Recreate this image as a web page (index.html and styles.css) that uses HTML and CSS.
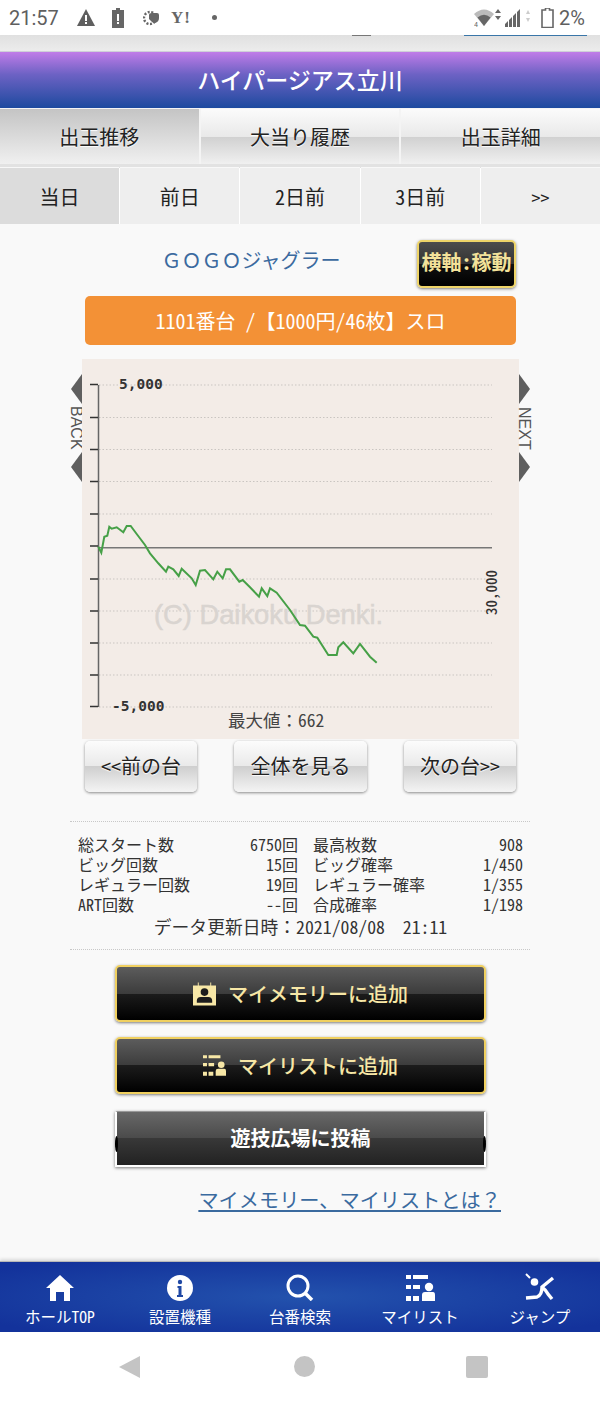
FILE: index.html
```html
<!DOCTYPE html>
<html lang="ja">
<head>
    <meta charset="UTF-8">
    <meta name="viewport" content="width=device-width, initial-scale=1.0">
    <title>ハイパージアス立川</title>
    <link rel="stylesheet" href="styles.css">
</head>
<body>
    <svg class="defs" width="0" height="0">
        <symbol id="icon-list" viewBox="0 0 29 26">
            <path d="M0 0h5v4H0zM7 0h15v4H7zM0 10h5v4H0zM7 10h7v4H7zM0 21h5v5H0zM7 21h6v5H7z"/>
            <circle cx="23" cy="12" r="4.2"/>
            <path d="M16 26v-6q0-3 3-3h8q2 0 2 3v6z"/>
        </symbol>
    </svg>

    <div class="status-bar">
        <span class="status-time">21:57</span>
        <svg class="st-warn" width="18" height="17" viewBox="0 0 18 17"><path d="M9 0l9 17H0z" fill="#5f5f5f"/><path d="M8 6h2v6H8zM8 13h2v2H8z" fill="#fff"/></svg>
        <svg class="st-batt" width="12" height="20" viewBox="0 0 12 20"><path d="M4 0h4v2h4v18H0V2h4z" fill="#666"/><path d="M5 6h2v7H5zM5 14h2v2H5z" fill="#fff"/></svg>
        <svg class="st-gear" width="16" height="18" viewBox="0 0 16 18"><circle cx="7" cy="9" r="6" fill="none" stroke="#666" stroke-width="2.4" stroke-dasharray="2 1.6"/><path d="M6 6q0-2 3-2h5q2 0 2 2v3q0 4-4 5-2 0-3-1l-3-3z" fill="#666"/></svg>
        <span class="st-yahoo">Y!</span>
        <span class="st-dot"></span>
        <span class="status-fill"></span>
        <svg class="st-wifi" width="28" height="20" viewBox="0 0 28 20"><path d="M0 6Q10-3 20 6l-10 12z" fill="#bbb"/><path d="M3.500 9.500q6.500-5.500 13 0L10 18z" fill="#666"/><text x="0" y="19" class="st-tiny">4</text><path d="M24 1l3 4h-6zM24 12l-3-4h6z" fill="#666"/></svg>
        <svg class="st-signal" width="26" height="20" viewBox="0 0 26 20"><path d="M0 19v-3l3-3v6zM4 19v-7l3-3v10zM8 19V8l3-3v14zM12 19V4l3-3v18z" fill="#666"/><path d="M23 2l2 4h-4zM23 14l-2-4h4z" fill="#ccc"/></svg>
        <svg class="st-level" width="13" height="20" viewBox="0 0 13 20"><path d="M4.500 0h4v2H12v17.500H1V2h3.500z" fill="none" stroke="#666" stroke-width="1.600"/></svg>
        <span class="status-pct">2%</span>
    </div>

    <div class="scroll-strip">
        <span class="strip-dark"></span>
        <span class="strip-link"></span>
    </div>

    <header class="hall-title">ハイパージアス立川</header>

    <nav class="tabs">
        <a class="tab active">出玉推移</a>
        <a class="tab">大当り履歴</a>
        <a class="tab">出玉詳細</a>
    </nav>

    <nav class="days">
        <a class="day active">当日</a>
        <a class="day">前日</a>
        <a class="day">2日前</a>
        <a class="day">3日前</a>
        <a class="day day-more">&gt;&gt;</a>
    </nav>

    <main class="content">
        <div class="machine-row">
            <h2 class="machine-name">ＧＯＧＯジャグラー</h2>
            <a class="axis-btn">横軸:稼動</a>
        </div>
        <div class="unit-bar">1101番台&nbsp;/【1000円/46枚】スロ</div>

        <div class="chart-row">
            <div class="side side-back">
                <span class="arrow arrow-left"></span>
                <span class="side-label">BACK</span>
                <span class="arrow arrow-left"></span>
            </div>
            <svg class="chart" width="437" height="380" viewBox="0 0 437 380">
                <g class="grid">
                    <path d="M17 26H410M17 58.500H410M17 90.500H410M17 122.500H410M17 155H410M17 220H410M17 252H410M17 284H410M17 316H410M17 348H410"/>
                </g>
                <text x="72" y="265" class="watermark">(C) Daikoku Denki.</text>
                <path class="zero" d="M17 188.700H410"/>
                <path class="axis" d="M16.500 26V348"/>
                <path class="ticks" d="M8 25.500H16M8 58.500H16M8 90.500H16M8 122.500H16M8 155H16M8 187H16M8 220H16M8 252H16M8 284H16M8 316H16M8 347.500H16"/>
                <text x="37" y="30" class="scale">5,000</text>
                <text x="30" y="352" class="scale">-5,000</text>
                <polyline class="trend" points="16.300,187.700 19.300,193.700 22.300,177.700 25.300,176.700 27.300,167.700 29.700,169.700 34.700,168.300 41.300,173.300 44.700,167 48.700,167 54.700,175 63,186 68,194.300 76.300,204.300 84,212.700 86.300,207.700 91.300,210.300 96.700,217 99.700,209.700 109.700,219.300 113.700,226 118,211.700 123,211 131.300,220.300 135.300,212.700 140.700,219.300 144,210.300 148,210.300 157.300,222.700 160.700,221 168,228.300 177,237.700 179.700,229.300 185.300,237 188,229.300 194.700,233.700 208,251 218,266 223,266.700 231.300,277.700 235.300,278.700 246.300,296 254.700,296 256.300,288.300 261.300,283.300 271.300,294.300 278,285 288,297.700 294.700,303.700"/>
                <text x="146" y="368" class="max-label">最大値<tspan class="fw">：</tspan>662</text>
                <text transform="translate(415 256) rotate(-90)" class="side-scale">30,000</text>
            </svg>
            <div class="side side-next">
                <span class="arrow arrow-right"></span>
                <span class="side-label">NEXT</span>
                <span class="arrow arrow-right"></span>
            </div>
        </div>

        <div class="pager">
            <a class="pager-btn">&lt;&lt;前の台</a>
            <a class="pager-btn pager-mid">全体を見る</a>
            <a class="pager-btn">次の台&gt;&gt;</a>
        </div>

        <section class="stats">
            <div class="stats-grid">
                <span>総スタート数</span><span class="num">6750回</span><span class="second">最高枚数</span><span class="num">908</span>
                <span>ビッグ回数</span><span class="num">15回</span><span class="second">ビッグ確率</span><span class="num">1/450</span>
                <span>レギュラー回数</span><span class="num">19回</span><span class="second">レギュラー確率</span><span class="num">1/355</span>
                <span>ART回数</span><span class="num">--回</span><span class="second">合成確率</span><span class="num">1/198</span>
            </div>
            <p class="updated">データ更新日時<span class="fw">：</span>2021/08/08&nbsp;&nbsp;21:11</p>
        </section>

        <div class="actions">
            <a class="gold-btn">
                <svg class="btn-icon" width="23" height="24" viewBox="0 0 24 24">
                    <path d="M0 3h5V0h1v3h12V0h1v3h5v21H0z" fill="#f7e7a6"/>
                    <circle cx="12" cy="10" r="4" fill="#1c1c1c"/>
                    <path d="M4 21v-2q0-4 4-4h8q4 0 4 4v2z" fill="#1c1c1c"/>
                </svg>
                マイメモリーに追加
            </a>
            <a class="gold-btn">
                <svg class="btn-icon list-gold" width="23" height="21"><use href="#icon-list"/></svg>
                マイリストに追加
            </a>
            <a class="post-btn">遊技広場に投稿</a>
        </div>

        <p class="help"><a class="help-link fw">マイメモリー、マイリストとは？</a></p>
    </main>

    <footer class="bottom-nav">
        <a class="nav-item">
            <svg width="28" height="26" viewBox="0 0 28 26"><path d="M14 0l14 13h-4v13h-6v-9h-8v9H4V13H0z" fill="#fff"/></svg>
            <span>ホールTOP</span>
        </a>
        <a class="nav-item">
            <svg width="26" height="26" viewBox="0 0 26 26"><circle cx="13" cy="13" r="13" fill="#fff"/><circle cx="13" cy="7" r="2.200" fill="#1f48a4"/><path d="M10.500 11h4v9h1.500v2h-6v-2h1.500v-7h-1z" fill="#1f48a4"/></svg>
            <span>設置機種</span>
        </a>
        <a class="nav-item">
            <svg width="28" height="27" viewBox="0 0 28 27"><circle cx="12" cy="12" r="10" fill="none" stroke="#fff" stroke-width="3"/><path d="M19 19l7 7" stroke="#fff" stroke-width="3.500"/></svg>
            <span>台番検索</span>
        </a>
        <a class="nav-item">
            <svg class="list-white" width="29" height="26"><use href="#icon-list"/></svg>
            <span>マイリスト</span>
        </a>
        <a class="nav-item">
            <svg width="30" height="28" viewBox="0 0 30 28"><circle cx="9.500" cy="9" r="3.800" fill="#fff"/><path d="M1 1l4 4" stroke="#fff" stroke-width="2"/><path d="M28 5L17 14q0 8-5 10l-11 1M17 14q4 3 6 7l4 5" fill="none" stroke="#fff" stroke-width="3.400"/></svg>
            <span>ジャンプ</span>
        </a>
    </footer>

    <div class="android-nav">
        <svg width="21" height="22" viewBox="0 0 21 22"><path d="M21 0v22L0 11z" fill="#c4c4c4"/></svg>
        <span class="android-home"></span>
        <span class="android-recent"></span>
    </div>
</body>
</html>
```

FILE: styles.css
```css
* {
    box-sizing: border-box;
}
html, body {
    height: 1401px;
}
body {
    margin: 0;
    display: flex;
    flex-direction: column;
    overflow: hidden;
    background-color: #f9f9f9;
    font-family: "Noto Sans CJK JP", "Noto Sans", sans-serif;
    font-feature-settings: "hwid";
    color: #2b2b2b;
}
.defs {
    position: absolute;
}
/* full width forms, the body setting narrows them */
.fw {
    font-feature-settings: normal;
}

/* status bar */
.status-bar {
    height: 35px;
    background-color: #fff;
    display: flex;
    align-items: center;
    padding: 0 15px 0 9px;
    color: #5f5f5f;
    flex-shrink: 0;
}
.status-time {
    font-family: Roboto, sans-serif;
    font-size: 20px;
    font-feature-settings: normal;
    width: 68px;
}
.st-batt {
    margin-left: 17px;
}
.st-gear {
    margin-left: 19px;
}
.st-yahoo {
    font-family: "Liberation Serif", serif;
    font-feature-settings: normal;
    font-weight: bold;
    font-size: 17px;
    letter-spacing: 1px;
    margin-left: 12px;
    width: 23px;
    color: #666;
}
.st-dot {
    width: 5px;
    height: 5px;
    border-radius: 50%;
    background-color: #666;
    margin-left: 18px;
}
.status-fill {
    flex: 1;
}
.st-tiny {
    font-family: Roboto, sans-serif;
    font-size: 7px;
    fill: #666;
}
.st-signal {
    margin-left: 3px;
}
.st-level {
    margin-left: 10px;
}
.status-pct {
    font-family: Roboto, sans-serif;
    font-feature-settings: normal;
    font-size: 20px;
    margin-left: 5px;
}

.scroll-strip {
    height: 16px;
    flex-shrink: 0;
    display: flex;
    align-items: flex-start;
    background: linear-gradient(#e0e0e0, #ececec);
    padding-left: 352px;
}
.strip-dark {
    width: 19px;
    height: 1px;
    background-color: #777;
}
.strip-link {
    width: 123px;
    height: 1px;
    margin-left: 93px;
    background-color: #3a76a8;
}

.hall-title {
    height: 57px;
    flex-shrink: 0;
    border-top: 1px solid #cfcfd8;
    background: linear-gradient(#c07ce8, #6d62c4 40%, #1d4a9f);
    color: #fff;
    font-size: 23px;
    font-weight: 500;
    line-height: 54px;
    text-align: center;
}

/* tabs */
.tabs {
    display: flex;
    gap: 2px;
    height: 56px;
    flex-shrink: 0;
    padding-top: 1px;
    background-color: #f4f4f4;
}
.tab {
    flex: 1;
    font-size: 20px;
    line-height: 56px;
    text-align: center;
    color: #222;
    text-shadow: 0 1px 1px #fff;
    background: linear-gradient(#fbfbfb, #e9e9e9 50%, #d0d0d0 50%, #f0f0f0);
}
.tab.active {
    background: linear-gradient(#c4c4c4, #f0f0f0);
}
.days {
    display: flex;
    gap: 1px;
    height: 60px;
    flex-shrink: 0;
    padding: 4px 0 0;
    background-color: #e2e2e2;
}
.day {
    flex: 1;
    font-size: 20px;
    line-height: 58px;
    text-align: center;
    color: #222;
    background-color: #eee;
    box-shadow: 0 -1px 0 #f8f8f8, 1px 0 0 #fff;
}
.day.active {
    background-color: #dcdcdc;
}
.day-more {
    font-size: 18px;
}

/* main */
.content {
    flex: 1;
    padding-top: 16px;
    background-color: #f9f9f9;
}
.machine-row {
    display: flex;
    align-items: flex-start;
    margin: 0 84px 0 85px;
}
.machine-name {
    flex: 1;
    margin: 6px 0 0;
    font-size: 20px;
    font-weight: normal;
    font-feature-settings: normal;
    line-height: 28px;
    text-align: center;
    color: #3b6a9f;
}
.axis-btn {
    width: 99px;
    height: 48px;
    border: 2px solid #eed468;
    border-radius: 5px;
    background: linear-gradient(#4c4c4c, #333 50%, #111 50%, #000);
    box-shadow: 0 1px 3px rgba(0, 0, 0, 0.5);
    color: #f3e29a;
    font-size: 20px;
    font-weight: bold;
    line-height: 40px;
    text-align: center;
    white-space: nowrap;
}
.unit-bar {
    margin: 8px 84px 0 85px;
    height: 49px;
    border-radius: 5px;
    background-color: #f39136;
    color: #fff;
    font-size: 20px;
    line-height: 49px;
    text-align: center;
    white-space: nowrap;
}

/* graph */
.chart-row {
    display: flex;
    margin: 14px 70px 0 71px;
}
.chart {
    display: block;
    background-color: #f3ece7;
}
.side {
    width: 11px;
    display: flex;
    flex-direction: column;
    align-items: center;
    padding-top: 15px;
}
.arrow {
    width: 0;
    height: 0;
    border-top: 15px solid transparent;
    border-bottom: 15px solid transparent;
}
.arrow-left {
    border-right: 11px solid #5f5f5f;
}
.arrow-right {
    border-left: 11px solid #5f5f5f;
}
.side-label {
    writing-mode: vertical-rl;
    font-family: "Liberation Sans", sans-serif;
    font-feature-settings: normal;
    font-size: 16px;
    line-height: 11px;
    height: 48px;
    text-align: center;
    color: #555;
}
.grid path {
    fill: none;
    stroke: #c9c5c1;
    stroke-width: 1;
    stroke-dasharray: 1.500 2;
}
.zero {
    stroke: #777;
    stroke-width: 1.500;
}
.axis {
    stroke: #666;
    stroke-width: 1.500;
}
.ticks {
    stroke: #333;
    stroke-width: 1.500;
}
.trend {
    fill: none;
    stroke: #46a047;
    stroke-width: 2;
}
.scale {
    font-family: "DejaVu Sans Mono", monospace;
    font-feature-settings: normal;
    font-size: 14.500px;
    font-weight: bold;
    fill: #333;
}
.watermark {
    font-family: "Liberation Sans", sans-serif;
    font-feature-settings: normal;
    font-size: 27.300px;
    fill: #d9d4d0;
    stroke: #d9d4d0;
    stroke-width: 0.500;
}
.max-label {
    font-size: 17.500px;
    fill: #444;
}
.side-scale {
    font-size: 15px;
    font-weight: 500;
    fill: #333;
}

.pager {
    display: flex;
    justify-content: space-between;
    margin: 2px 84px 0 85px;
}
.pager-btn {
    width: 112px;
    height: 51px;
    border-radius: 5px;
    background: linear-gradient(#fcfcfc, #e9e9e9 50%, #cfcfcf 50%, #f4f4f4);
    box-shadow: 0 1px 3px rgba(0, 0, 0, 0.45);
    color: #222;
    font-size: 20px;
    line-height: 50px;
    text-align: center;
    text-shadow: 0 1px 1px #fff;
    white-space: nowrap;
}
.pager-mid {
    width: 133px;
}

/* numbers */
.stats {
    margin: 29px 70px 0;
    padding: 12px 7px 11px 8px;
    border-top: 1px dotted #c8c8c8;
    border-bottom: 1px dotted #c8c8c8;
}
.stats-grid {
    display: grid;
    grid-template-columns: 160px 60px 165px 60px;
    grid-auto-rows: 20px;
    font-size: 16px;
    line-height: 20px;
    white-space: nowrap;
    color: #333;
}
.num {
    text-align: right;
}
.second {
    padding-left: 15px;
}
.updated {
    margin: 0;
    font-size: 17.800px;
    line-height: 24px;
    text-align: center;
    color: #333;
}

/* buttons */
.actions {
    display: flex;
    flex-direction: column;
    gap: 15px;
    margin: 15px 114px 0 115px;
}
.gold-btn {
    display: flex;
    align-items: center;
    justify-content: center;
    height: 57px;
    border: 2px solid #f0d060;
    border-radius: 5px;
    background: linear-gradient(#5c5c5c, #3c3c3c 50%, #1c1c1c 50%, #000);
    box-shadow: 0 1px 3px rgba(0, 0, 0, 0.5);
    color: #f7e7a6;
    font-size: 20px;
    font-weight: 500;
}
.btn-icon {
    margin-right: 12px;
}
.list-gold {
    fill: #f7e7a6;
}
.list-white {
    fill: #fff;
}
.post-btn {
    position: relative;
    height: 56px;
    margin-top: 2px;
    border: 2px solid #fff;
    border-top: 1px solid #999;
    background: linear-gradient(#686868, #4a4a4a 50%, #383838 50%, #222);
    box-shadow: 0 1px 3px rgba(0, 0, 0, 0.5);
    color: #fff;
    font-size: 20px;
    font-weight: bold;
    line-height: 51px;
    text-align: center;
}
/* the small black points on the button's sides */
.post-btn::before,
.post-btn::after {
    content: "";
    position: absolute;
    top: 24px;
    width: 3px;
    height: 16px;
    border-radius: 50%;
    background-color: #000;
}
.post-btn::before {
    left: -2px;
}
.post-btn::after {
    right: -2px;
}
.help {
    margin: 18px 99px 0 0;
    text-align: right;
    font-size: 20.200px;
    line-height: 30px;
}
.help-link {
    color: #3a6a9f;
    text-decoration: underline;
}

/* footer */
.bottom-nav {
    display: flex;
    height: 71px;
    flex-shrink: 0;
    border-top: 1px solid #b8b8b8;
    background: radial-gradient(ellipse at center, #2352ad, #13329b 90%);
    box-shadow: 0 -2px 3px rgba(0, 0, 0, 0.12);
}
.nav-item {
    flex: 1;
    display: flex;
    flex-direction: column;
    align-items: center;
    justify-content: flex-end;
    color: #fff;
    font-size: 15.500px;
    line-height: 22px;
    padding-bottom: 5px;
}
.nav-item svg {
    fill: #fff;
    margin-bottom: 4px;
}
.android-nav {
    height: 69px;
    flex-shrink: 0;
    background-color: #fff;
    display: flex;
    align-items: center;
    padding-left: 119px;
}
.android-home {
    width: 21px;
    height: 21px;
    border-radius: 50%;
    background-color: #c4c4c4;
    margin-left: 154px;
}
.android-recent {
    width: 22px;
    height: 22px;
    border-radius: 2px;
    background-color: #c4c4c4;
    margin-left: 151px;
}
```
